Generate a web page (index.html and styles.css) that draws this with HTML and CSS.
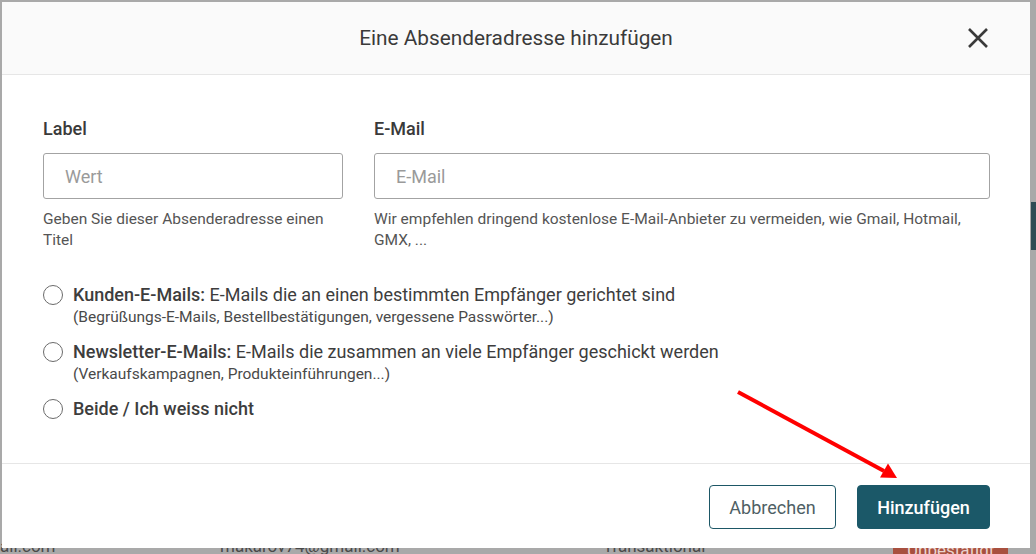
FILE: index.html
```html
<!DOCTYPE html>
<html lang="de">
<head>
<meta charset="utf-8">
<title>Eine Absenderadresse hinzufügen</title>
<link rel="stylesheet" href="styles.css">
</head>
<body>
<div class="page">
  <div class="page-toolbar"><span class="page-btn"></span></div>
  <div class="page-row">
    <span>ail.com</span>
    <span>makarov74@gmail.com</span>
    <span>Transaktional</span>
    <span><span class="badge">Unbestätigt</span></span>
  </div>
</div>

<div class="modal">
  <header class="modal-header">
    <span></span>
    <h2 class="modal-title">Eine Absenderadresse hinzufügen</h2>
    <button class="close" aria-label="Schließen">
      <svg width="22" height="22" viewBox="0 0 22 22"><path d="M2 2 L20 20 M20 2 L2 20" stroke="#3a3a3a" stroke-width="2.6" stroke-linecap="butt" fill="none"/></svg>
    </button>
  </header>

  <div class="modal-body">
    <div class="fields">
      <div class="field">
        <label class="field-label">Label</label>
        <input class="input" type="text" placeholder="Wert">
        <p class="help">Geben Sie dieser Absenderadresse einen Titel</p>
      </div>
      <div class="field">
        <label class="field-label">E-Mail</label>
        <input class="input" type="text" placeholder="E-Mail">
        <p class="help">Wir empfehlen dringend kostenlose E-Mail-Anbieter zu vermeiden, wie Gmail, Hotmail, GMX, ...</p>
      </div>
    </div>

    <div class="options">
      <label class="option">
        <span class="radio"></span>
        <span class="option-text">
          <span class="option-main"><strong>Kunden-E-Mails:</strong> E-Mails die an einen bestimmten Empfänger gerichtet sind</span>
          <span class="option-sub">(Begrüßungs-E-Mails, Bestellbestätigungen, vergessene Passwörter...)</span>
        </span>
      </label>
      <label class="option">
        <span class="radio"></span>
        <span class="option-text">
          <span class="option-main"><strong>Newsletter-E-Mails:</strong> E-Mails die zusammen an viele Empfänger geschickt werden</span>
          <span class="option-sub">(Verkaufskampagnen, Produkteinführungen...)</span>
        </span>
      </label>
      <label class="option">
        <span class="radio"></span>
        <span class="option-text">
          <span class="option-main"><strong>Beide / Ich weiss nicht</strong></span>
        </span>
      </label>
    </div>
  </div>

  <footer class="modal-footer">
    <button class="btn btn-outline">Abbrechen</button>
    <button class="btn btn-primary">Hinzufügen</button>
  </footer>
</div>

<svg class="annotation-arrow" width="1036" height="554" viewBox="0 0 1036 554">
  <line x1="738" y1="392" x2="884" y2="471" stroke="#ff0000" stroke-width="4"/>
  <polygon points="897,478 880,477.5 888,463.5" fill="#ff0000"/>
</svg>
</body>
</html>
```

FILE: styles.css
```css
* {
  box-sizing: border-box;
}

html, body {
  margin: 0;
  padding: 0;
}

body {
  width: 1036px;
  height: 554px;
  overflow: hidden;
  position: relative;
  background: #a9a9a9;
  font-family: Roboto, "Liberation Sans", Arial, sans-serif;
  color: #3a3a3a;
}

/* dimmed page behind the modal */
.page {
  height: 554px;
  display: flex;
  flex-direction: column;
}

.page-toolbar {
  padding-top: 202px;
  padding-left: 1031px;
}

.page-btn {
  display: block;
  width: 5px;
  height: 48px;
  background: #2f4c55;
}

.page-row {
  margin-top: auto;
  margin-bottom: -8px;
  display: grid;
  grid-template-columns: 220px 383px 290px 1fr;
  font-size: 17px;
  line-height: 20px;
  color: #4a4a4a;
}

.badge {
  display: inline-block;
  background: #a8503f;
  color: #e9d4cf;
  padding: 0 14px;
  line-height: 24px;
  margin-top: 2px;
}

/* modal */
.modal {
  position: absolute;
  top: 2px;
  left: 2px;
  width: 1028px;
  height: 546px;
  background: #ffffff;
  display: flex;
  flex-direction: column;
}

.modal-header {
  height: 73px;
  background: #fafafa;
  border-bottom: 1px solid #e6e6e6;
  display: grid;
  grid-template-columns: 1fr auto 1fr;
  align-items: center;
  padding: 0 41px 0 41px;
}

.modal-title {
  margin: 0;
  font-size: 20.8px;
  font-weight: 400;
  color: #3a3a3a;
  line-height: 24px;
}

.close {
  justify-self: end;
  border: 0;
  background: transparent;
  padding: 0;
  width: 22px;
  height: 22px;
  display: flex;
  cursor: pointer;
}

.modal-body {
  padding: 43px 40px 0 41px;
  flex: 0 0 389px;
  border-bottom: 1px solid #e6e6e6;
}

.fields {
  display: grid;
  grid-template-columns: 300px 1fr;
  column-gap: 31px;
}

.field {
  display: flex;
  flex-direction: column;
}

.field-label {
  font-size: 18px;
  font-weight: 500;
  line-height: 22px;
  color: #3a3a3a;
  margin-bottom: 13px;
}

.input {
  height: 46px;
  border: 1px solid #a3a3a3;
  border-radius: 3px;
  padding: 0 21px;
  font-family: inherit;
  font-size: 18px;
  color: #333;
  background: #fff;
  outline: none;
}

.input::placeholder {
  color: #9a9a9a;
}

.help {
  margin: 10px 0 0;
  font-size: 15.5px;
  line-height: 21px;
  color: #555555;
}

.options {
  margin-top: 33px;
  display: flex;
  flex-direction: column;
  gap: 13px;
}

.option {
  display: flex;
  align-items: flex-start;
  gap: 10px;
  cursor: pointer;
}

.radio {
  flex: 0 0 20px;
  width: 20px;
  height: 20px;
  margin-top: 1px;
  border: 1.5px solid #6b6b6b;
  border-radius: 50%;
  background: #fff;
}

.option-text {
  display: flex;
  flex-direction: column;
}

.option-main {
  font-size: 18px;
  line-height: 22px;
  color: #3d3d3d;
}

.option-main strong {
  font-weight: 500;
}

.option-sub {
  font-size: 15.5px;
  line-height: 22px;
  color: #4a4a4a;
}

.modal-footer {
  flex: 1;
  display: flex;
  justify-content: flex-end;
  align-items: flex-start;
  gap: 21px;
  padding: 21px 40px 0 0;
}

.btn {
  height: 44px;
  border-radius: 4px;
  font-family: inherit;
  font-size: 18px;
  padding: 0 10px;
  cursor: pointer;
}

.btn-outline {
  width: 127px;
  background: #fff;
  border: 1px solid #1d5766;
  color: #4f5f65;
  font-weight: 400;
}

.btn-primary {
  width: 133px;
  background: #1b5868;
  border: 1px solid #1b5868;
  color: #ffffff;
  font-weight: 500;
}

.annotation-arrow {
  position: absolute;
  top: 0;
  left: 0;
  pointer-events: none;
}
```
